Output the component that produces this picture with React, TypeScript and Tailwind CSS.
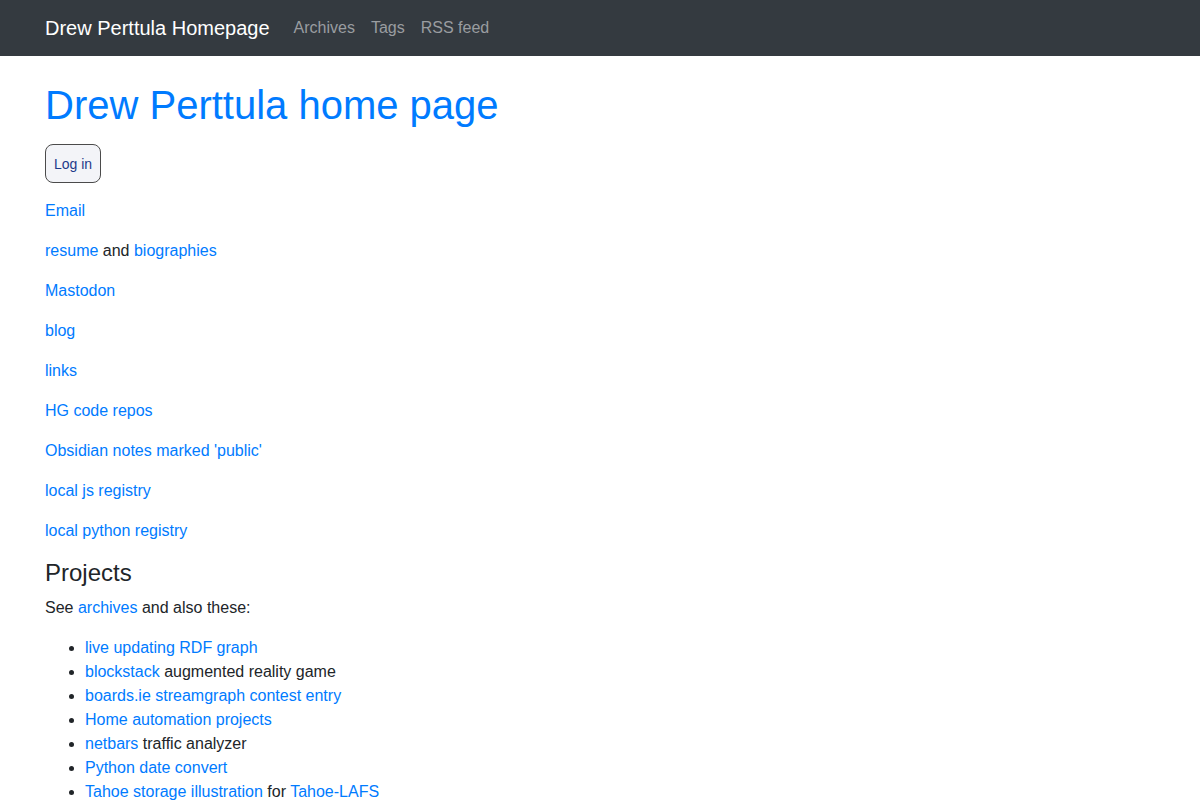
const links: { href: string; parts: [string, boolean][] }[] = [
  { href: "#", parts: [["Email", true]] },
  { href: "#", parts: [["resume", true], [" and ", false], ["biographies", true]] },
  { href: "#", parts: [["Mastodon", true]] },
  { href: "#", parts: [["blog", true]] },
  { href: "#", parts: [["links", true]] },
  { href: "#", parts: [["HG code repos", true]] },
  { href: "#", parts: [["Obsidian notes marked 'public'", true]] },
  { href: "#", parts: [["local js registry", true]] },
  { href: "#", parts: [["local python registry", true]] },
];

const projects: [string, boolean][][] = [
  [["live updating RDF graph", true]],
  [["blockstack", true], [" augmented reality game", false]],
  [["boards.ie streamgraph contest entry", true]],
  [["Home automation projects", true]],
  [["netbars", true], [" traffic analyzer", false]],
  [["Python date convert", true]],
  [["Tahoe storage illustration", true], [" for ", false], ["Tahoe-LAFS", true]],
];

function Parts({ parts }: { parts: [string, boolean][] }) {
  return (
    <>
      {parts.map(([text, isLink], i) =>
        isLink ? (
          <a key={i} href="#" className="text-[#007bff] hover:underline">
            {text}
          </a>
        ) : (
          <span key={i}>{text}</span>
        )
      )}
    </>
  );
}

export default function App() {
  return (
    <div className="min-h-screen bg-white text-[#212529] text-base leading-6 font-['Liberation_Sans',Arial,sans-serif]">
      <nav className="bg-[#343a40] h-14">
        <div className="max-w-[1140px] mx-auto px-[15px] h-full flex items-center">
          <a href="#" className="text-white text-xl leading-[30px] mr-4">
            Drew Perttula Homepage
          </a>
          <div className="flex">
            <a href="#" className="px-2 text-[#9a9da0]">Archives</a>
            <a href="#" className="px-2 text-[#9a9da0]">Tags</a>
            <a href="#" className="px-2 text-[#9a9da0]">RSS feed</a>
          </div>
        </div>
      </nav>

      <main className="max-w-[1140px] mx-auto px-[15px] pt-[25px]">
        <h1 className="text-[40px] leading-[48px] text-[#007bff] mb-[15px]">
          Drew Perttula home page
        </h1>
        <button className="block w-[56px] h-[39px] mb-4 text-sm text-[#1e3a8a] bg-[#f3f4f8] border border-[#4b4b4b] rounded-lg">
          Log in
        </button>

        {links.map((l, i) => (
          <p key={i} className="mb-4">
            <Parts parts={l.parts} />
          </p>
        ))}

        <h4 className="text-2xl leading-[28.8px] mb-2">Projects</h4>
        <p className="mb-4">
          See <a href="#" className="text-[#007bff]">archives</a> and also these:
        </p>
        <ul className="list-disc pl-10">
          {projects.map((p, i) => (
            <li key={i}>
              <Parts parts={p} />
            </li>
          ))}
        </ul>
      </main>
    </div>
  );
}
